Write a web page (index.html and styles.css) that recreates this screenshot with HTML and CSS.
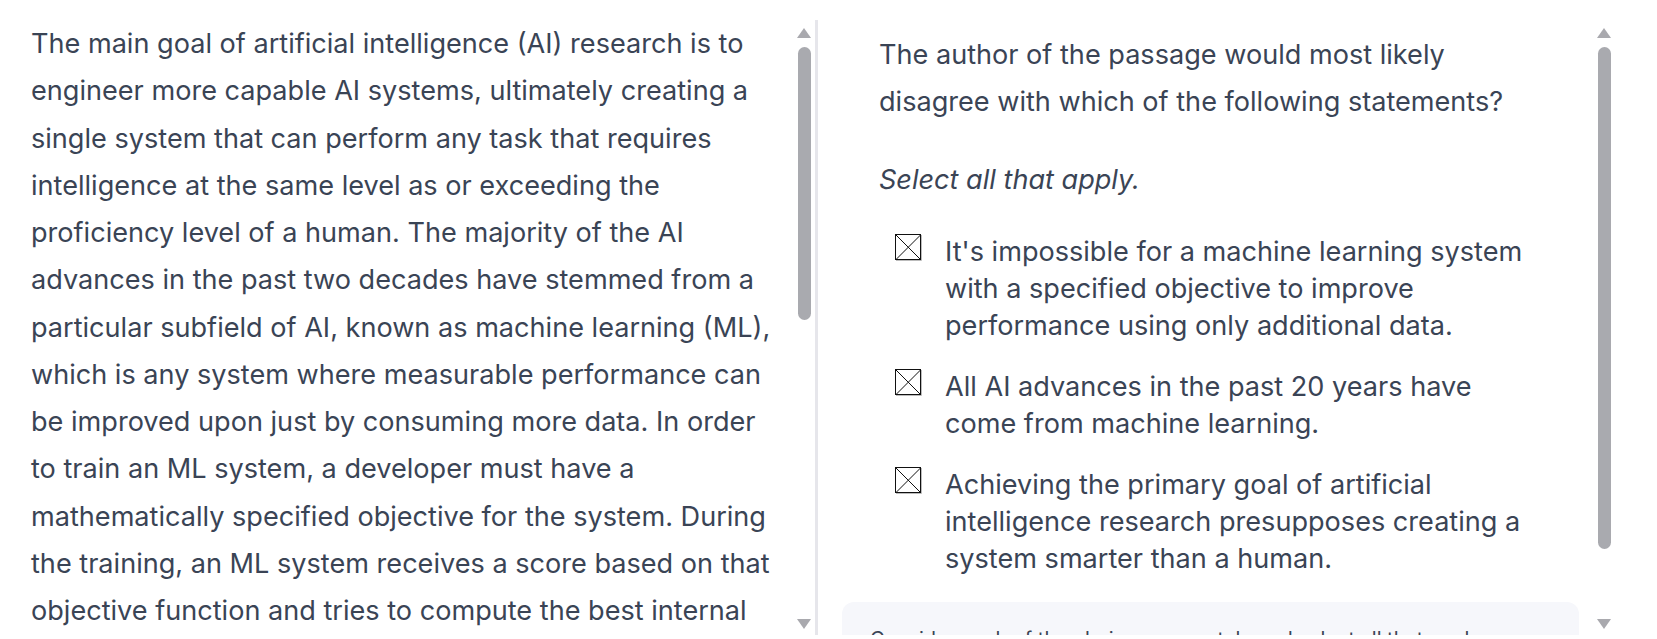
FILE: index.html
```html
<!DOCTYPE html>
<html lang="en">
<head>
<meta charset="utf-8">
<title>Reading question</title>
<link rel="stylesheet" href="styles.css">
</head>
<body>
<div class="split">
  <section class="pane pane-passage">
    <div class="scroll-content passage">
      <p>The main goal of artificial intelligence (AI) research is to engineer more capable AI systems, ultimately creating a single system that can perform any task that requires intelligence at the same level as or exceeding the proficiency level of a human. The majority of the AI advances in the past two decades have stemmed from a particular subfield of AI, known as machine learning (ML), which is any system where measurable performance can be improved upon just by consuming more data. In order to train an ML system, a developer must have a mathematically specified objective for the system. During the training, an ML system receives a score based on that objective function and tries to compute the best internal parameters to maximize its score.</p>
    </div>
    <div class="scrollbar scrollbar-left">
      <span class="arrow arrow-up"></span>
      <span class="thumb thumb-left"></span>
      <span class="track-fill"></span>
      <span class="arrow arrow-down"></span>
    </div>
  </section>
  <div class="divider"></div>
  <section class="pane pane-question">
    <div class="scroll-content question">
      <p class="stem">The author of the passage would most likely disagree with which of the following statements?</p>
      <p class="instruction">Select all that apply.</p>
      <ul class="options">
        <li class="option">
          <svg class="box" width="27" height="27" viewBox="0 0 27 27" aria-hidden="true"><rect x="0.5" y="0.5" width="25" height="25" fill="#fff" stroke="#111" stroke-width="1"/><path d="M1 1 L25.5 25.5 M25.5 1 L1 25.5" stroke="#111" stroke-width="1"/><path d="M26.5 1 V26.5 H1" stroke="#bbb" stroke-width="1" fill="none"/></svg>
          <span class="option-text">It's impossible for a machine learning system with a specified objective to improve performance using only additional data.</span>
        </li>
        <li class="option">
          <svg class="box" width="27" height="27" viewBox="0 0 27 27" aria-hidden="true"><rect x="0.5" y="0.5" width="25" height="25" fill="#fff" stroke="#111" stroke-width="1"/><path d="M1 1 L25.5 25.5 M25.5 1 L1 25.5" stroke="#111" stroke-width="1"/><path d="M26.5 1 V26.5 H1" stroke="#bbb" stroke-width="1" fill="none"/></svg>
          <span class="option-text">All AI advances in the past 20 years have come from machine learning.</span>
        </li>
        <li class="option">
          <svg class="box" width="27" height="27" viewBox="0 0 27 27" aria-hidden="true"><rect x="0.5" y="0.5" width="25" height="25" fill="#fff" stroke="#111" stroke-width="1"/><path d="M1 1 L25.5 25.5 M25.5 1 L1 25.5" stroke="#111" stroke-width="1"/><path d="M26.5 1 V26.5 H1" stroke="#bbb" stroke-width="1" fill="none"/></svg>
          <span class="option-text">Achieving the primary goal of artificial intelligence research presupposes creating a system smarter than a human.</span>
        </li>
      </ul>
      <div class="hint">Consider each of the choices separately and select all that apply.</div>
    </div>
    <div class="scrollbar scrollbar-right">
      <span class="arrow arrow-up"></span>
      <span class="thumb thumb-right"></span>
      <span class="track-fill"></span>
      <span class="arrow arrow-down"></span>
    </div>
  </section>
</div>
</body>
</html>
```

FILE: styles.css
```css
* { box-sizing: border-box; }
html, body { margin: 0; padding: 0; background: #fff; }
body {
  font-family: "Inter", "Lato", sans-serif;
  color: #3a4455;
}
.split {
  display: flex;
  height: 615px;
  margin-top: 20px;
}
.pane {
  display: flex;
  min-width: 0;
}
.pane-passage { width: 815px; }
.pane-question { flex: 1; }
.scroll-content {
  flex: 1;
  overflow: hidden;
  min-width: 0;
}
.passage { padding-left: 31px; }
.passage p {
  margin: 0;
  max-width: 752px;
  font-size: 27.1px;
  line-height: 47.25px;
}
.divider { width: 3px; background: #e6e6eb; }
.question { padding: 11px 18px 0 24px; }
.stem, .instruction {
  margin: 0 0 0 37px;
  font-size: 27.1px;
  line-height: 47.25px;
}
.stem { max-width: 650px; }
.instruction { font-style: italic; margin-top: 30px; }
.options { list-style: none; margin: 30px 0 25px 0; padding: 0 0 0 53px; }
.option { display: flex; gap: 23px; align-items: flex-start; }
.option + .option { margin-top: 24px; }
.box { flex: none; margin-top: 1px; }
.option-text { font-size: 27.1px; line-height: 37px; max-width: 592px; }
.hint {
  background: #f6f7fb;
  border-radius: 12px;
  padding: 22px 28px;
  font-size: 20px;
  line-height: 30px;
}
.scrollbar {
  flex: none;
  width: 14px;
  margin-top: 8px;
  display: flex;
  flex-direction: column;
  align-items: center;
}
.scrollbar-left { margin-right: 4px; }
.scrollbar-right { margin-right: 46px; }
.arrow { width: 0; height: 0; border-left: 7px solid transparent; border-right: 7px solid transparent; }
.arrow-up { border-bottom: 10px solid #a9a9ae; }
.arrow-down { border-top: 10px solid #a9a9ae; margin-bottom: 6px; }
.thumb { width: 13px; border-radius: 7px; background: #a9aaaf; margin-top: 9px; }
.thumb-left { height: 273px; }
.thumb-right { height: 502px; }
.track-fill { flex: 1; }
```
